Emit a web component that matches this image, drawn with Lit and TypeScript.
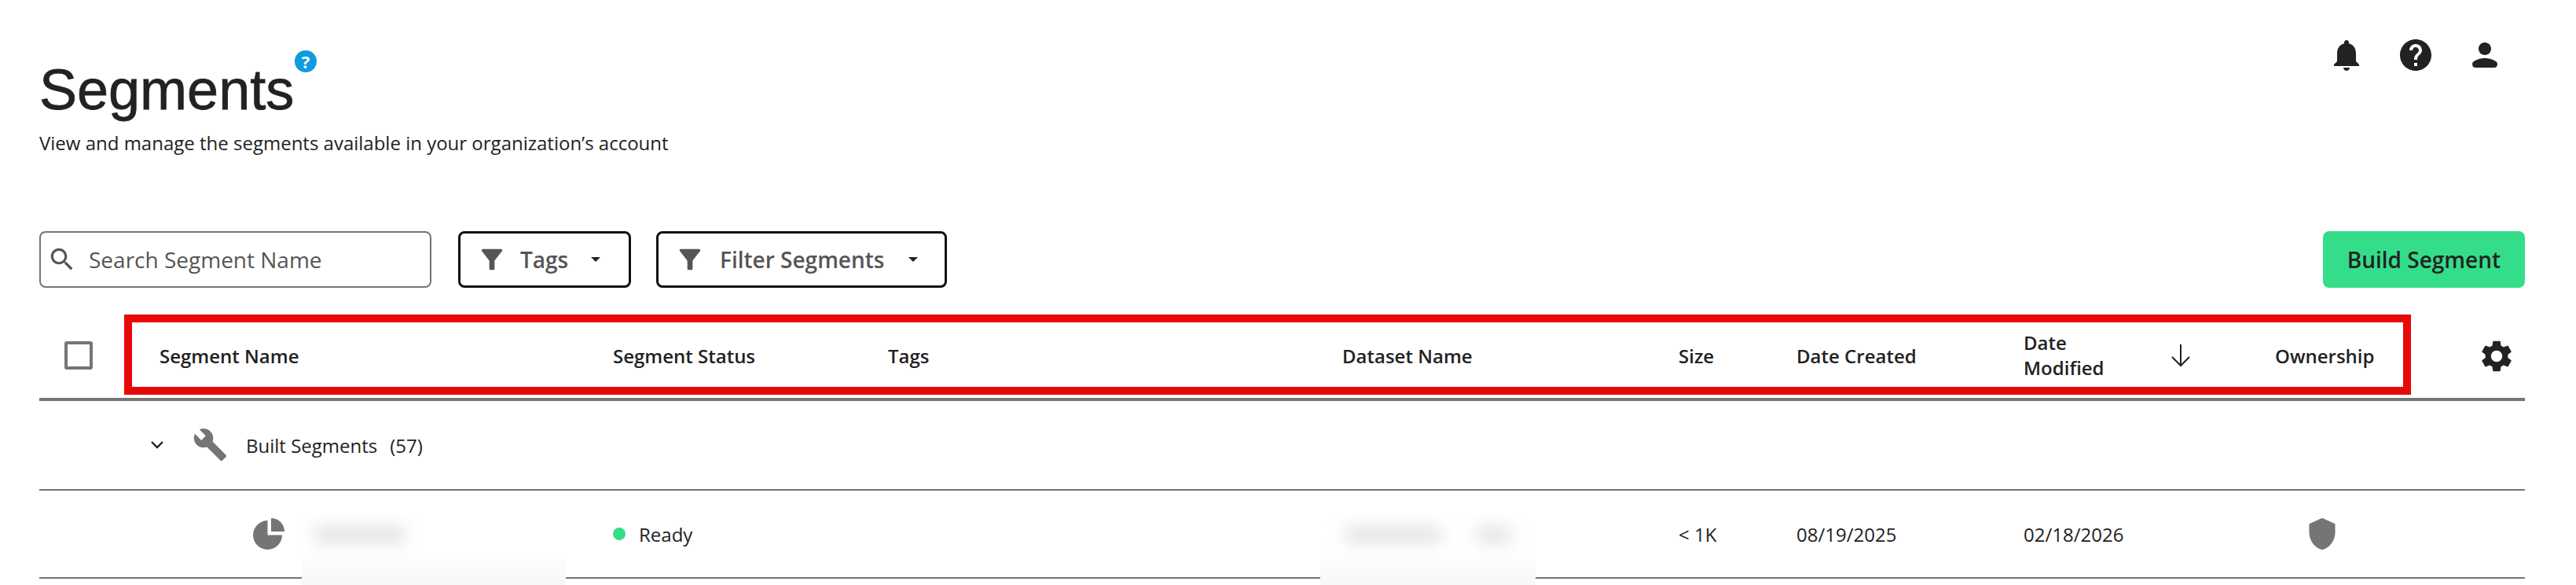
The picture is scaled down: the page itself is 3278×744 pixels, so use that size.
import { LitElement, html, css, svg } from 'lit';
import { customElement } from 'lit/decorators.js';

const ICONS = {
  bell: 'M12 22c1.1 0 2-.9 2-2h-4c0 1.1.9 2 2 2zm6-6v-5c0-3.07-1.63-5.64-4.5-6.32V4c0-.83-.67-1.5-1.5-1.5s-1.5.67-1.5 1.5v.68C7.64 5.36 6 7.92 6 11v5l-2 2v1h16v-1l-2-2z',
  help: 'M12 2C6.48 2 2 6.48 2 12s4.48 10 10 10 10-4.48 10-10S17.52 2 12 2zm1 17h-2v-2h2v2zm2.07-7.75l-.9.92C13.45 12.9 13 13.5 13 15h-2v-.5c0-1.1.45-2.1 1.17-2.83l1.24-1.26c.37-.36.59-.86.59-1.41 0-1.1-.9-2-2-2s-2 .9-2 2H8c0-2.21 1.79-4 4-4s4 1.79 4 4c0 .88-.36 1.68-.93 2.25z',
  person: 'M12 12c2.21 0 4-1.79 4-4s-1.79-4-4-4-4 1.79-4 4 1.79 4 4 4zm0 2c-2.67 0-8 1.34-8 3.6C4 19 4.7 20 6 20h12c1.3 0 2-1 2-2.4 0-2.26-5.33-3.6-8-3.6z',
  search: 'M15.5 14h-.79l-.28-.27C15.41 12.59 16 11.11 16 9.5 16 5.91 13.09 3 9.5 3S3 5.91 3 9.5 5.91 16 9.5 16c1.61 0 3.09-.59 4.23-1.57l.27.28v.79l5 4.99L20.49 19l-4.99-5zm-6 0C7.01 14 5 11.99 5 9.5S7.01 5 9.5 5 14 7.01 14 9.5 11.99 14 9.5 14z',
  funnel: 'M4.25 5.61C6.27 8.2 10 13 10 13v6c0 .55.45 1 1 1h2c.55 0 1-.45 1-1v-6s3.72-4.8 5.74-7.39c.51-.66.04-1.61-.79-1.61H5.04c-.83 0-1.3.95-.79 1.61z',
  wrench: 'M22.7 19l-9.1-9.1c.9-2.3.4-5-1.5-6.9-2-2-5-2.4-7.4-1.3L9 6 6 9 1.6 4.7C.4 7.1.9 10.1 2.9 12.1c1.9 1.9 4.6 2.4 6.9 1.5l9.1 9.1c.4.4 1 .4 1.4 0l2.3-2.3c.5-.4.5-1.1.1-1.4z',
  gear: 'M19.14 12.94c.04-.3.06-.61.06-.94 0-.32-.02-.64-.07-.94l2.03-1.58c.18-.14.23-.41.12-.61l-1.92-3.32c-.12-.22-.37-.29-.59-.22l-2.39.96c-.5-.38-1.03-.7-1.62-.94l-.36-2.54c-.04-.24-.24-.41-.48-.41h-3.84c-.24 0-.43.17-.47.41l-.36 2.54c-.59.24-1.13.57-1.62.94l-2.39-.96c-.22-.08-.47 0-.59.22L2.74 8.87c-.12.21-.08.47.12.61l2.03 1.58c-.05.3-.09.63-.09.94s.02.64.07.94l-2.03 1.58c-.18.14-.23.41-.12.61l1.92 3.32c.12.22.37.29.59.22l2.39-.96c.5.38 1.03.7 1.62.94l.36 2.54c.05.24.24.41.48.41h3.84c.24 0 .44-.17.47-.41l.36-2.54c.59-.24 1.13-.56 1.62-.94l2.39.96c.22.08.47 0 .59-.22l1.92-3.32c.12-.22.07-.47-.12-.61l-2.01-1.58zM12 15.6c-1.98 0-3.6-1.62-3.6-3.6s1.62-3.6 3.6-3.6 3.6 1.62 3.6 3.6-1.62 3.6-3.6 3.6z',
  shield: 'M12 1L3 5v6c0 5.55 3.84 10.74 9 12 5.16-1.26 9-6.45 9-12V5l-9-4z',
};

const icon = (name: keyof typeof ICONS, size: number, cls = '') => html`
  <svg class=${cls} width=${size} height=${size} viewBox="0 0 24 24" fill="currentColor">${svg`<path d=${ICONS[name]}></path>`}</svg>`;

@customElement('app-root')
export class AppRoot extends LitElement {
  static styles = css`
    :host {
      display: block;
      height: 744px;
      overflow: hidden;
      box-sizing: border-box;
      padding: 0 65px 0 50px;
      background: #fff;
      color: #222;
      font-family: 'Open Sans', sans-serif;
      font-size: 24px;
    }

    svg { display: block; flex: none; }

    .top {
      display: flex;
      justify-content: space-between;
      align-items: flex-start;
    }

    .heading { padding-top: 74px; }

    .title-wrap {
      position: relative;
      display: inline-block;
    }

    h1 {
      margin: 0;
      font: 400 72px/80px 'Liberation Sans', Arial, sans-serif;
      color: #222;
      -webkit-text-stroke: 0.8px #222;
    }

    .badge {
      position: absolute;
      left: 325px;
      top: -10px;
      width: 28px;
      height: 28px;
      border-radius: 50%;
      background: #0f9be0;
      color: #fff;
      font: 700 22px/28px 'Open Sans', sans-serif;
      text-align: center;
    }

    .sub {
      margin: 12px 0 0;
      font-size: 24px;
      line-height: 32px;
      color: #222;
    }

    .top-icons {
      display: flex;
      gap: 40px;
      padding: 46px 27px 0 0;
    }

    .toolbar {
      display: flex;
      align-items: stretch;
      gap: 32px;
      height: 72px;
      margin-top: 96px;
    }

    .search {
      display: flex;
      align-items: center;
      box-sizing: border-box;
      width: 499px;
      margin-right: 2px;
      padding-left: 8px;
      border: 2px solid #757575;
      border-radius: 8px;
      font-size: 28px;
      color: #555;
    }

    .search span { margin-left: 15px; }

    .drop {
      display: flex;
      align-items: center;
      box-sizing: border-box;
      padding-left: 20px;
      border: 3px solid #111;
      border-radius: 8px;
      font-size: 28px;
      font-weight: 600;
      color: #555;
    }

    .drop .funnel { margin-right: 18px; }

    .caret {
      width: 0;
      height: 0;
      margin-left: 31px;
      border-left: 6px solid transparent;
      border-right: 6px solid transparent;
      border-top: 6px solid #222;
    }

    .tags { width: 220px; }
    .tags .funnel { margin-right: 16px; }
    .tags .caret { margin-left: 29px; }
    .filter { width: 370px; }

    .build {
      display: flex;
      align-items: center;
      margin-left: auto;
      padding: 0 31px;
      border-radius: 8px;
      background: #34dd8a;
      font-size: 28px;
      font-weight: 600;
      color: #222;
    }

    .grid {
      display: grid;
      grid-template-columns: 153px 577px 350px 578px 428px 150px 289px 320px 318px;
      align-items: center;
    }

    .thead {
      position: relative;
      box-sizing: border-box;
      height: 110px;
      margin-top: 34px;
      padding-bottom: 2px;
      border-bottom: 4px solid #757575;
      font-weight: 600;
    }

    .check {
      box-sizing: border-box;
      width: 36px;
      height: 36px;
      margin-left: 32px;
      border: 4px solid #757575;
      border-radius: 3px;
    }

    .modified {
      display: flex;
      justify-content: space-between;
      align-items: center;
      padding-right: 105px;
      line-height: 32px;
    }

    .redbox {
      position: absolute;
      left: 108px;
      top: 0;
      box-sizing: border-box;
      width: 2910px;
      height: 102px;
      border: 10px solid #e80808;
    }

    .gear {
      position: absolute;
      right: 12px;
      top: 29px;
      color: #222;
    }

    .group {
      display: flex;
      align-items: center;
      box-sizing: border-box;
      height: 114px;
      padding-left: 142px;
      border-bottom: 2px solid #757575;
    }

    .group .wrench { margin: -2px 0 0 37px; color: #757575; }
    .group .label { margin-left: 23px; }
    .group .count { margin-left: 16px; }

    .row {
      position: relative;
      box-sizing: border-box;
      height: 112px;
      border-bottom: 2px solid #757575;
    }

    .name { padding-left: 119px; color: #757575; }

    .status {
      display: flex;
      align-items: center;
      gap: 17px;
    }

    .dot {
      width: 16px;
      height: 16px;
      border-radius: 50%;
      background: #34dd8a;
    }

    .own { padding-left: 38px; color: #757575; }

    .mask {
      position: absolute;
      top: 30px;
      height: 90px;
      overflow: hidden;
      background: linear-gradient(#fff 0, #fff 52%, #f8f8f8 92%);
    }

    .smudge {
      position: absolute;
      top: 14px;
      height: 24px;
      border-radius: 12px;
      background: #e6e6e6;
      filter: blur(10px);
    }
  `;

  render () {
    return html`
      <div class="top">
        <div class="heading">
          <div class="title-wrap">
            <h1>Segments</h1>
            <div class="badge">?</div>
          </div>
          <p class="sub">View and manage the segments available in your organization’s account</p>
        </div>
        <div class="top-icons">
          ${icon('bell', 48)}
          ${icon('help', 48)}
          ${icon('person', 48)}
        </div>
      </div>

      <div class="toolbar">
        <div class="search">${icon('search', 38)}<span>Search Segment Name</span></div>
        <div class="drop tags">${icon('funnel', 40, 'funnel')}<span>Tags</span><i class="caret"></i></div>
        <div class="drop filter">${icon('funnel', 40, 'funnel')}<span>Filter Segments</span><i class="caret"></i></div>
        <div class="build">Build Segment</div>
      </div>

      <div class="thead grid">
        <div class="check"></div>
        <div>Segment Name</div>
        <div>Segment Status</div>
        <div>Tags</div>
        <div>Dataset Name</div>
        <div>Size</div>
        <div>Date Created</div>
        <div class="modified">
          <span>Date<br />Modified</span>
          <svg width="30" height="30" viewBox="0 0 30 30" fill="none" stroke="#222" stroke-width="2">${svg`<path d="M15 1v27M4 17l11 11 11-11"></path>`}</svg>
        </div>
        <div>Ownership</div>
        <div class="redbox"></div>
        ${icon('gear', 48, 'gear')}
      </div>

      <div class="group">
        <svg width="16" height="10" viewBox="0 0 16 10" fill="none" stroke="#222" stroke-width="2.4">${svg`<path d="M1 1l7 7 7-7"></path>`}</svg>
        ${icon('wrench', 45, 'wrench')}
        <span class="label">Built Segments</span>
        <span class="count">(57)</span>
      </div>

      <div class="row grid">
        <div></div>
        <div class="name">
          <svg width="40" height="40" viewBox="0 0 40 40" fill="currentColor">${svg`<path d="M18.5 3A18.5 18.5 0 1 0 37 21.5H18.5zM23 0a17 17 0 0 1 17 17H23z"></path>`}</svg>
        </div>
        <div class="status"><i class="dot"></i>Ready</div>
        <div></div>
        <div></div>
        <div>&lt; 1K</div>
        <div>08/19/2025</div>
        <div>02/18/2026</div>
        <div class="own">${icon('shield', 44)}</div>
        <div class="mask" style="left: 334px; width: 336px">
          <i class="smudge" style="left: 14px; width: 120px"></i>
        </div>
        <div class="mask" style="left: 1630px; width: 274px">
          <i class="smudge" style="left: 30px; width: 126px"></i>
          <i class="smudge" style="left: 197px; width: 48px"></i>
        </div>
      </div>
    `;
  }
}
